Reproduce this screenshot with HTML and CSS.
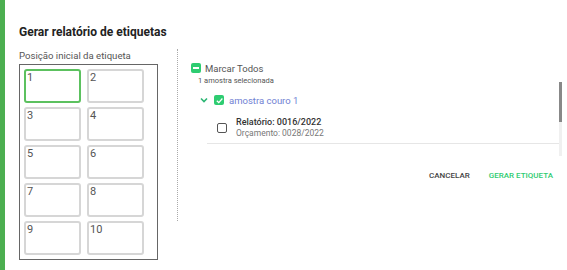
FILE: index.html
```html
<!DOCTYPE html>
<html lang="pt">
<head>
    <meta charset="UTF-8">
    <meta name="viewport" content="width=device-width, initial-scale=1.0">
    <title>Gerar relatório de etiquetas</title>
    <link rel="stylesheet" href="styles.css">
</head>
<body>
<div class="stripe"></div>
<div class="dialog">
    <h2 class="title">Gerar relatório de etiquetas</h2>
    <div class="content">
        <div class="left">
            <div class="label">Posição inicial da etiqueta</div>
            <div class="sheet">
                <div class="cell selected">1</div>
                <div class="cell">2</div>
                <div class="cell">3</div>
                <div class="cell">4</div>
                <div class="cell">5</div>
                <div class="cell">6</div>
                <div class="cell">7</div>
                <div class="cell">8</div>
                <div class="cell">9</div>
                <div class="cell">10</div>
            </div>
        </div>
        <div class="right">
            <div class="list">
                <div class="all-row">
                    <span class="check partial"><span class="dash"></span></span>
                    <span class="all-text">Marcar Todos</span>
                </div>
                <div class="count">1 amostra selecionada</div>
                <div class="group-row">
                    <svg class="chevron" width="8" height="6" viewBox="0 0 8 6">
                        <path d="M1 1.5 L4 4.5 L7 1.5" fill="none" stroke="#2bb673" stroke-width="1.6"/>
                    </svg>
                    <span class="check checked">
                        <svg width="9" height="9" viewBox="0 0 10 10">
                            <path d="M2 5.2 L4.2 7.3 L8.2 2.8" fill="none" stroke="#fff" stroke-width="1.4"/>
                        </svg>
                    </span>
                    <span class="group-text">amostra couro 1</span>
                </div>
                <div class="item-row">
                    <span class="check empty"></span>
                    <div class="item-text">
                        <div class="item-title">Relatório: 0016/2022</div>
                        <div class="item-sub">Orçamento: 0028/2022</div>
                    </div>
                </div>
                <div class="scrollbar"><div class="thumb"></div></div>
            </div>
            <div class="actions">
                <button class="btn cancel">Cancelar</button>
                <button class="btn confirm">Gerar etiqueta</button>
            </div>
        </div>
    </div>
</div>
</body>
</html>
```
FILE: styles.css
```css
body {
    margin: 0;
    display: flex;
    height: 270px;
    overflow: hidden;
    font-family: Roboto, "Liberation Sans", sans-serif;
    background-color: #fff;
    color: #333;
}
.stripe {
    width: 5px;
    background-color: #4caf50;
    flex-shrink: 0;
}
.dialog {
    flex: 1;
    padding: 25px 0 0 14px;
}
.title {
    margin: 0;
    font-size: 12px;
    line-height: 14px;
    font-weight: 700;
    color: #222;
}
.content {
    display: flex;
    margin-top: 10px;
}
.left {
    width: 158px;
    flex-shrink: 0;
}
.label {
    font-size: 9.6px;
    line-height: 12px;
    color: #555;
    margin-bottom: 2px;
    margin-top: 1px;
}
.sheet {
    width: 124px;
    display: grid;
    grid-template-columns: 57px 57px;
    grid-auto-rows: 34px;
    column-gap: 6px;
    row-gap: 4px;
    padding: 4px 9px 4px 4px;
    border: 1px solid #666;
}
.cell {
    box-sizing: border-box;
    border: 2px solid #d6d6d6;
    border-radius: 3px;
    font-size: 11px;
    line-height: 13px;
    padding: 0 1px;
    color: #555;
}
.cell.selected {
    border-color: #5cc15f;
}
.right {
    flex: 1;
    border-left: 1px dotted #aaa;
    height: 172px;
    padding-left: 13px;
}
.list {
    position: relative;
    height: 108px;
    padding-top: 12px;
}
.all-row {
    display: flex;
    align-items: center;
    height: 14px;
}
.check {
    width: 10px;
    height: 10px;
    box-sizing: border-box;
    border-radius: 2px;
    display: flex;
    align-items: center;
    justify-content: center;
    flex-shrink: 0;
}
.check.partial,
.check.checked {
    background-color: #2ecc71;
}
.dash {
    width: 6px;
    height: 2px;
    background-color: #fff;
}
.check.empty {
    border: 1.5px solid #555;
}
.all-text {
    margin-left: 4px;
    font-size: 9.5px;
    color: #555;
}
.count {
    margin: 1px 0 0 7px;
    font-size: 7.5px;
    line-height: 10px;
    color: #555;
}
.group-row {
    display: flex;
    align-items: center;
    margin: 7px 0 0 9px;
    height: 14px;
}
.chevron {
    margin-right: 6px;
}
.group-text {
    margin-left: 5px;
    font-size: 9.5px;
    color: #6f7fd3;
}
.item-row {
    display: flex;
    align-items: center;
    margin: 10px 7px 0 16px;
    padding: 0 0 5px 10px;
    border-bottom: 1px solid #e6e6e6;
}
.item-text {
    margin-left: 9px;
}
.item-title {
    font-size: 9px;
    font-weight: 500;
    line-height: 11px;
    color: #333;
}
.item-sub {
    font-size: 8.5px;
    line-height: 10px;
    color: #777;
}
.scrollbar {
    position: absolute;
    right: 5px;
    top: 33px;
    width: 3px;
    height: 74px;
    background-color: #f0f0f0;
}
.thumb {
    height: 40px;
    background-color: #888;
}
.actions {
    display: flex;
    justify-content: flex-end;
    gap: 19px;
    margin-top: 2px;
    padding-right: 14px;
}
.btn {
    background: none;
    border: none;
    padding: 0;
    font-family: Roboto, "Liberation Sans", sans-serif;
    font-size: 8px;
    font-weight: 500;
    text-transform: uppercase;
    cursor: pointer;
}
.cancel {
    color: #444;
}
.confirm {
    color: #2ecc71;
}
```
